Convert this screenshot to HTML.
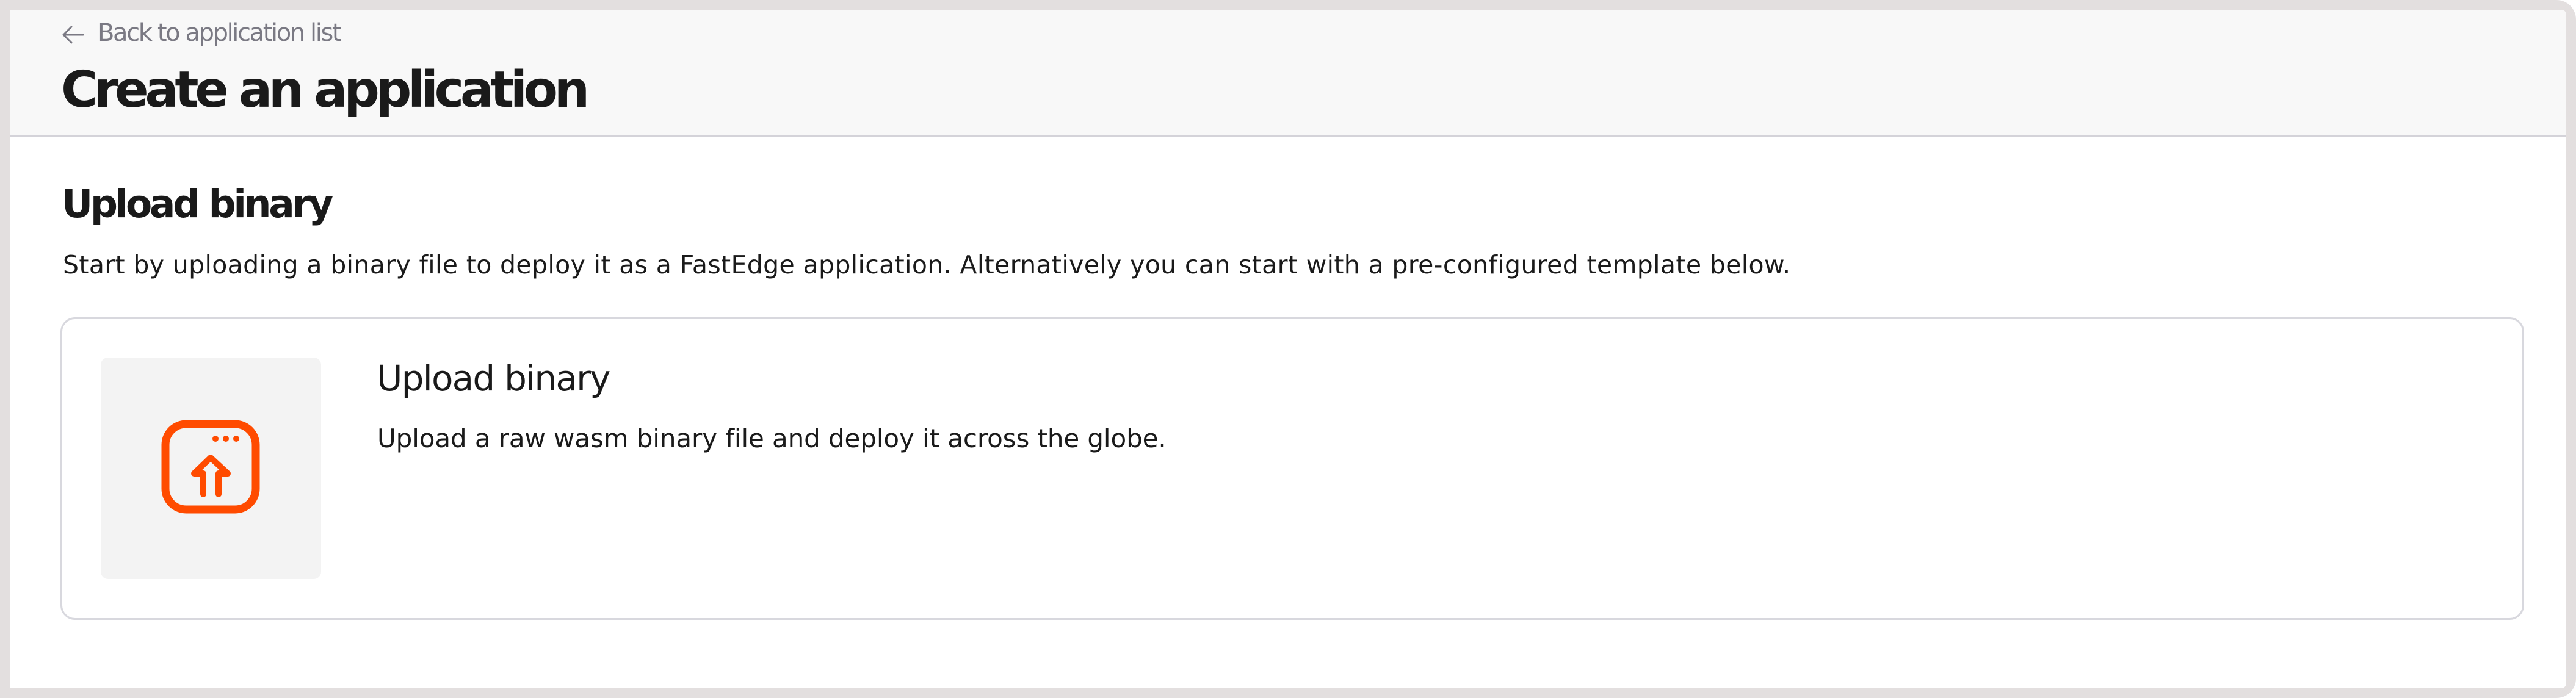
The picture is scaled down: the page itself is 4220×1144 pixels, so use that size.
<!DOCTYPE html>
<html><head><meta charset="utf-8"><style>
html,body{margin:0;padding:0;}
body{width:4220px;height:1144px;background:#fff;position:relative;overflow:hidden;font-family:"DejaVu Sans","Liberation Sans",sans-serif;color:#1a1a1a;}
.frame{position:absolute;left:0;top:0;width:4220px;height:1144px;background:#e3dfdf;border-radius:0 32px 32px 0;}
.panel{position:absolute;left:16px;top:16px;width:4188px;height:1112px;background:#fff;border-radius:0 8px 8px 0;overflow:hidden;}
.hdr{position:absolute;left:0;top:0;width:100%;height:206px;background:#f8f8f8;border-bottom:3px solid #d4d3d9;}
.t{position:absolute;white-space:nowrap;}
</style></head><body>
<div class="frame"></div>
<div class="panel">
  <div class="hdr"></div>
</div>
<svg style="position:absolute;left:0;top:0" width="4220" height="1144">
  <path d="M136 57 H104 M117 44 L104 57 L117 70" fill="none" stroke="#7a7983" stroke-width="3" stroke-linecap="round" stroke-linejoin="round"/>
</svg>
<div class="t" style="left:160px;top:31px;font-size:40px;color:#7a7983;letter-spacing:-2.4px;">Back to application list</div>
<div class="t" style="left:100px;top:100px;font-size:82px;font-weight:bold;letter-spacing:-6.3px;">Create an application</div>
<div class="t" style="left:101px;top:298px;font-size:63px;font-weight:bold;letter-spacing:-4.3px;">Upload binary</div>
<div class="t" style="left:103px;top:410px;font-size:41px;letter-spacing:0.36px;">Start by uploading a binary file to deploy it as a FastEdge application. Alternatively you can start with a pre-configured template below.</div>
<div style="position:absolute;left:99px;top:520px;width:4030px;height:490px;border:3px solid #d8d8de;border-radius:24px;"></div>
<div style="position:absolute;left:165px;top:586px;width:361px;height:363px;background:#f3f3f3;border-radius:12px;"></div>
<svg style="position:absolute;left:0;top:0" width="4220" height="1144">
  <rect x="271" y="695" width="148" height="140" rx="34" fill="none" stroke="#ff4b00" stroke-width="13"/>
  <circle cx="353" cy="719" r="5" fill="#ff4b00"/>
  <circle cx="370" cy="719" r="5" fill="#ff4b00"/>
  <circle cx="387" cy="719" r="5" fill="#ff4b00"/>
  <path d="M333 810 V776 H318 L345 750 L373 776 H358 V810" fill="none" stroke="#ff4b00" stroke-width="10" stroke-linecap="round" stroke-linejoin="round"/>
</svg>
<div class="t" style="left:617px;top:586px;font-size:58px;letter-spacing:-1.8px;">Upload binary</div>
<div class="t" style="left:618px;top:694px;font-size:42px;letter-spacing:-0.1px;">Upload a raw wasm binary file and deploy it across the globe.</div>
</body></html>
